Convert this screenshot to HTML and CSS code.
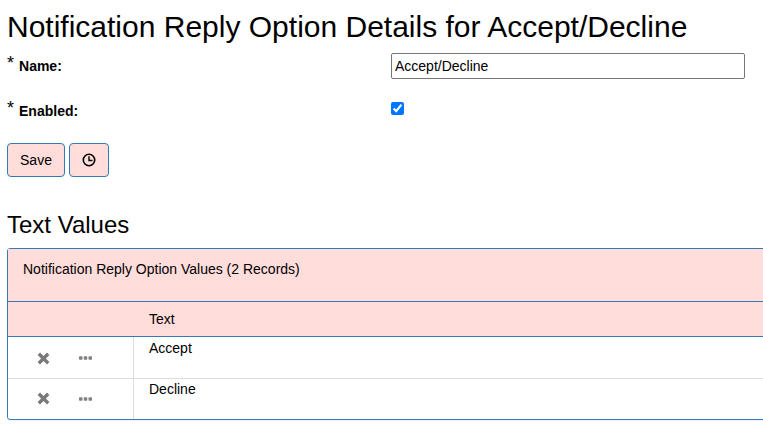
FILE: index.html
```html
<!DOCTYPE html>
<html lang="en">
<head>
<meta charset="utf-8">
<title>Notification Reply Option Details</title>
<link rel="stylesheet" href="styles.css">
</head>
<body>
<h1 class="title">Notification Reply Option Details for Accept/Decline</h1>
<div class="form-row name-row">
  <label class="label"><span class="req">*</span><b>Name:</b></label>
  <input class="text-input" type="text" value="Accept/Decline">
</div>
<div class="form-row enabled-row">
  <label class="label"><span class="req">*</span><b>Enabled:</b></label>
  <input class="check" type="checkbox" checked>
</div>
<div class="actions">
  <button class="btn save">Save</button>
  <button class="btn history" aria-label="History">
    <svg width="14" height="14" viewBox="0 0 14 14" fill="none" stroke="#000" stroke-width="1.6"><circle cx="7" cy="7" r="5.7"/><path d="M7 3.200V7.500H10.500" stroke-width="1.4"/></svg>
  </button>
</div>
<h2 class="subtitle">Text Values</h2>
<section class="panel">
  <div class="panel-head">Notification Reply Option Values (2 Records)</div>
  <div class="row head-row"><div class="icons"></div><div class="cell">Text</div></div>
  <div class="row body-row">
    <div class="icons divided">
      <svg class="x" width="13" height="13" viewBox="0 0 13 13"><path d="M3 .6 6.500 4.100 10 .6 12.400 3 8.900 6.500 12.400 10 10 12.400 6.500 8.900 3 12.400 .6 10 4.100 6.500 .6 3Z" fill="#7a7a7a"/></svg>
      <svg class="dots" width="13" height="4" viewBox="0 0 13 4"><g fill="#808080"><rect y=".3" width="3.500" height="3.400" rx=".8"/><rect x="4.750" y=".3" width="3.500" height="3.400" rx=".8"/><rect x="9.500" y=".3" width="3.500" height="3.400" rx=".8"/></g></svg>
    </div>
    <div class="cell">Accept</div>
  </div>
  <div class="row body-row last">
    <div class="icons divided">
      <svg class="x" width="13" height="13" viewBox="0 0 13 13"><path d="M3 .6 6.500 4.100 10 .6 12.400 3 8.900 6.500 12.400 10 10 12.400 6.500 8.900 3 12.400 .6 10 4.100 6.500 .6 3Z" fill="#7a7a7a"/></svg>
      <svg class="dots" width="13" height="4" viewBox="0 0 13 4"><g fill="#808080"><rect y=".3" width="3.500" height="3.400" rx=".8"/><rect x="4.750" y=".3" width="3.500" height="3.400" rx=".8"/><rect x="9.500" y=".3" width="3.500" height="3.400" rx=".8"/></g></svg>
    </div>
    <div class="cell">Decline</div>
  </div>
</section>
</body>
</html>
```

FILE: styles.css
```css
html, body {
  margin: 0;
  height: 100%;
  overflow: hidden;
  background: #fff;
}
body {
  padding: 0 0 0 7px;
  box-sizing: border-box;
  font-family: "Liberation Sans", Arial, sans-serif;
  font-size: 14px;
  color: #000;
}
.title {
  margin: 0;
  padding-top: 9px;
  font-size: 30px;
  font-weight: 400;
  line-height: 36px;
}
.form-row {
  display: flex;
  align-items: flex-start;
}
.name-row { margin-top: 8px; height: 26px; }
.enabled-row { margin-top: 22px; height: 22px; }
.label {
  width: 384px;
  flex: none;
  font-size: 14px;
  line-height: 26px;
}
.enabled-row .label { line-height: 16px; margin-top: -2px; }
.req { font-size: 18px; margin-right: 5px; vertical-align: 2px; line-height: 1; }
.text-input {
  width: 354px;
  height: 26px;
  box-sizing: border-box;
  padding: 1px 3px;
  border: 1px solid #767676;
  border-radius: 2px;
  font: 14px "Liberation Sans", Arial, sans-serif;
  color: #000;
}
.check {
  width: 13px;
  height: 13px;
  margin: 1px 0 0;
  accent-color: #0075ff;
}
.actions {
  display: flex;
  gap: 4px;
  margin-top: 20px;
}
.btn {
  height: 34px;
  box-sizing: border-box;
  background: #ffdddb;
  border: 1px solid #337ab7;
  border-radius: 4px;
  font: 14px "Liberation Sans", Arial, sans-serif;
  color: #000;
  padding: 0;
}
.save { width: 58px; }
.history { width: 40px; display: flex; align-items: center; justify-content: center; }
.subtitle {
  margin: 34px 0 0;
  font-size: 24px;
  font-weight: 400;
  line-height: 28px;
}
.panel {
  width: 800px;
  margin-top: 9px;
  box-sizing: border-box;
  border: 1px solid #337ab7;
  border-radius: 3px 0 0 3px;
  box-shadow: 0 1px 1px rgba(0,0,0,.05);
}
.panel-head {
  height: 53px;
  box-sizing: border-box;
  padding: 12px 15px;
  background: #ffdddb;
  line-height: 17px;
  border-bottom: 1px solid #337ab7;
}
.row { display: flex; }
.head-row {
  height: 35px;
  box-sizing: border-box;
  background: #ffdddb;
  border-bottom: 1px solid #337ab7;
  line-height: 35px;
}
.icons {
  width: 126px;
  flex: none;
  display: flex;
  align-items: center;
  box-sizing: border-box;
  padding: 1px 0 0 29px;
  gap: 29px;
}
.divided { border-right: 1px solid #ddd; }
.cell { padding-left: 15px; }
.body-row {
  height: 42px;
  box-sizing: border-box;
  border-bottom: 1px solid #ddd;
}
.body-row .cell { padding-top: 3px; line-height: 17px; }
.body-row.last { height: 40px; border-bottom: 0; }
.body-row.last .icons { padding-top: 0; padding-bottom: 1px; }
.body-row.last .cell { padding-top: 2px; }
```
